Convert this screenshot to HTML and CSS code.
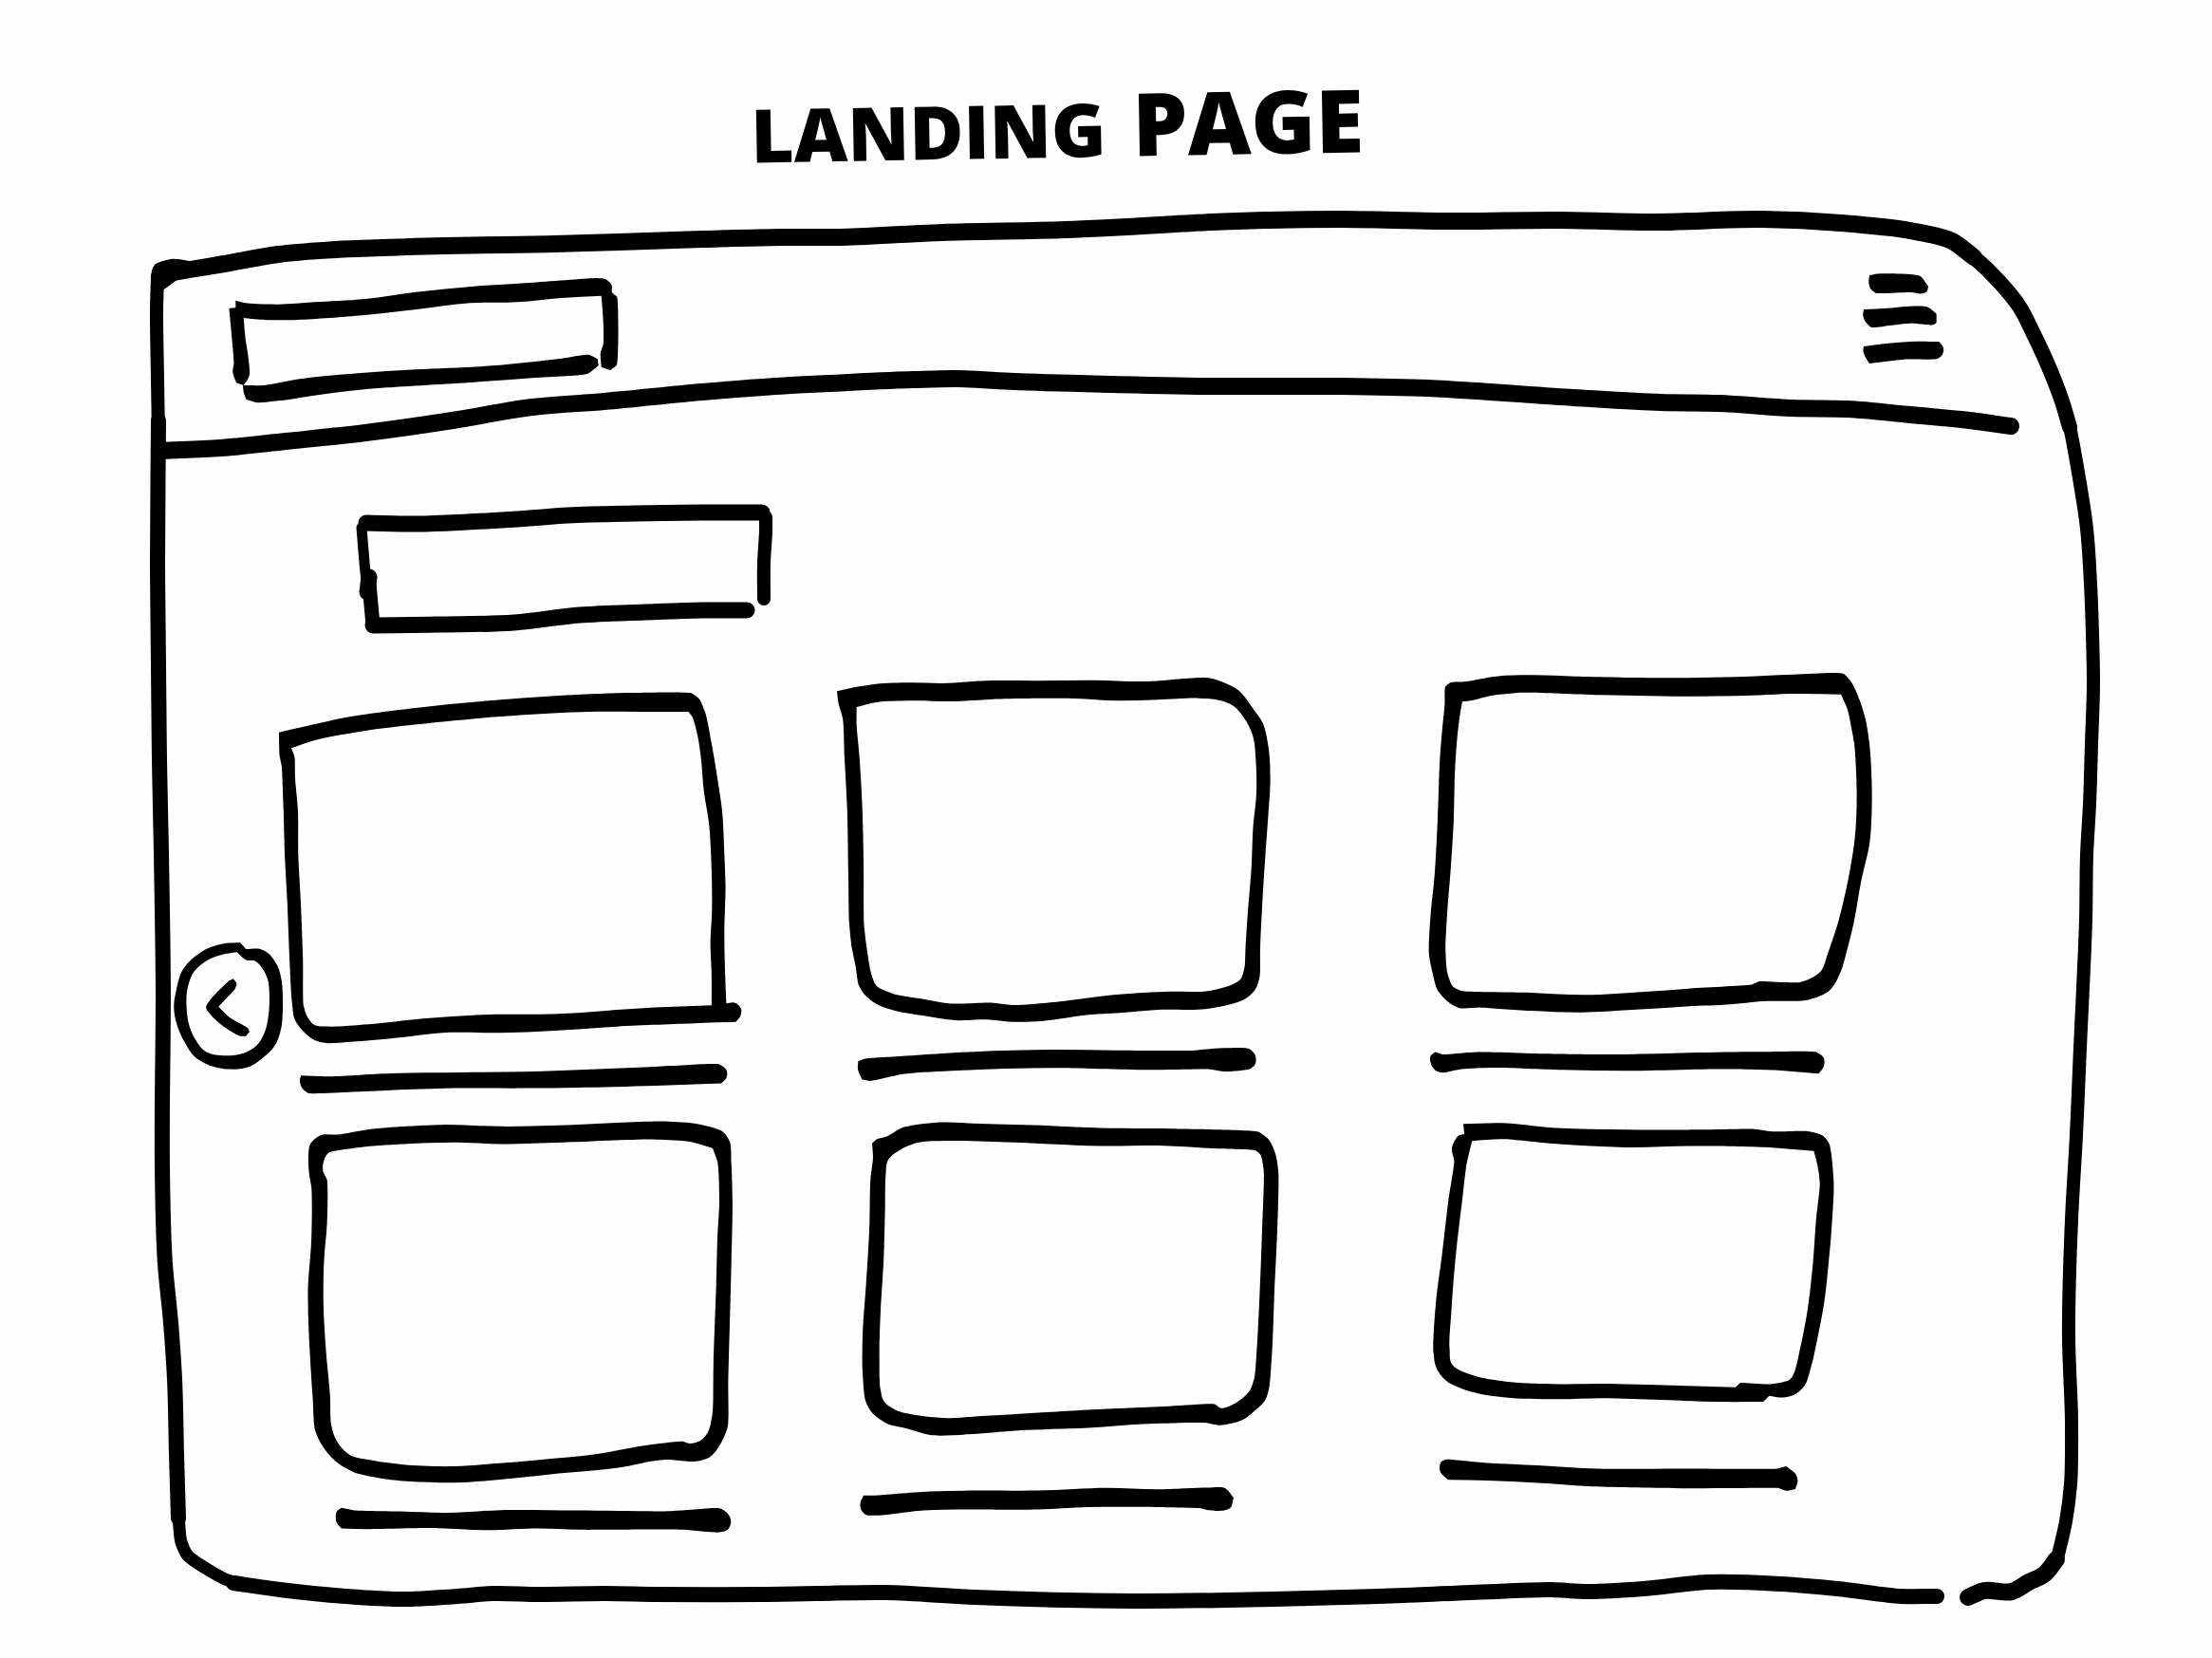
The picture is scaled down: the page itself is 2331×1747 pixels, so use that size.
FILE: index.html
```html
<!DOCTYPE html>
<html lang="en">
<head>
<meta charset="utf-8">
<meta name="viewport" content="width=device-width, initial-scale=1">
<title>Landing page</title>
<link rel="stylesheet" href="styles.css">
</head>
<body>
<h1 class="title"><span>LANDING</span> <span class="large">PAGE</span></h1>
<main class="frame">
  <!-- window outline and header rule -->
  <svg class="outline" viewBox="140 210 2091 1500" preserveAspectRatio="none" aria-hidden="true">
    <polyline stroke-width="18" points="171,289 200,284 236,278 293,268 354,263 469,259 584,257 740,252 824,250 885,250 993,245 1123,242 1276,234 1337,232 1413,231 1536,233 1643,232 1743,234 1857,231 1940,235 2013,243 2057,254 2080,271"/>
    <polygon points="160,285 163,279 180,273 215,278 188,294 172,305 164,306"/>
    <polyline stroke-width="16" points="2057,254 2080,271 2107,297 2128,323 2143,352 2157,382 2173,423 2181,450"/>
    <polyline stroke-width="14" points="2173,423 2181,450 2190,498 2199,557 2203,615 2205,668 2206,721 2204,784 2202,847 2199,901 2198,969 2195,1041 2192,1104 2188,1196 2183,1285 2180,1410 2183,1499 2182,1564 2177,1603 2167,1646"/>
    <polyline stroke-width="18" points="2167,1643 2154,1659 2138,1667 2120,1677 2091,1676 2074,1683"/>
    <polyline stroke-width="16" points="2041,1682 2003,1682 1936,1674 1877,1669 1800,1667 1732,1674 1674,1677 1635,1675 1480,1681 1380,1684 1193,1687 1027,1683 933,1678 860,1679 800,1680 691,1680 638,1679 568,1680 519,1679 482,1682 421,1685 364,1682 295,1675 246,1668"/>
    <polyline stroke-width="13" points="256,1669 240,1665 221,1655 197,1638 191,1625 188,1597"/>
    <polyline stroke-width="16" points="188,1600 186,1532 184,1453 180,1394 174,1332 171,1229 171,1160 172,1053 170,900 168,800 167,700 166,593 167,443"/>
    <polyline stroke-width="14" points="167,460 166,400 165,327 166,290"/>
    <polyline stroke-width="18" points="171,475 232,472 301,465 385,456 477,443 561,429 637,423 740,413 817,407 962,400 1008,399 1069,402 1276,407 1413,407 1505,409 1658,419 1750,424 1811,425 1888,430 1947,431 2013,437 2067,442 2119,449"/>
  </svg>

  <header class="bar">
    <a class="logo" href="#" aria-label="Home">
      <svg class="ink" viewBox="235 280 420 150">
        <g transform="translate(140 210) scale(.3827 .3333)">
          <polygon points="283,320 310,328 400,332 500,325 640,315 780,293 940,275 1100,263 1280,249 1300,252 1318,270 1320,295 1333,308 1332,525 1315,540 1290,530 1288,485 1295,460 1295,380 1290,305 1180,312 1060,325 930,328 780,348 600,370 430,382 350,380 305,375 310,440 318,500 320,560 305,588 285,580 275,545 278,520 272,430 265,345 283,343"/>
          <polygon points="303,588 360,588 460,568 620,550 780,538 1000,525 1180,503 1258,492 1280,505 1282,525 1255,550 1100,565 940,578 700,595 600,605 500,620 400,637 340,642 312,632 305,610"/>
        </g>
      </svg>
    </a>
    <button class="menu" type="button" aria-label="Menu">
      <svg class="ink" viewBox="1960 280 90 110">
        <g transform="translate(1880 200) scale(.3333)">
          <polygon points="270,270 290,266 432,274 456,305 452,320 436,328 400,324 290,326 275,315 268,295"/>
          <polygon points="252,378 330,374 400,368 455,371 482,392 482,420 472,427 400,422 340,428 275,434 260,420 250,398"/>
          <polygon points="252,495 330,485 400,480 490,480 504,500 500,522 485,534 380,536 320,543 270,549 258,530 250,508"/>
        </g>
      </svg>
    </button>
  </header>

  <div class="heading">
    <svg class="ink" viewBox="370 525 450 150" aria-hidden="true">
      <g class="pen">
        <polyline stroke-width="17" points="386,551 440,552 492,550 545,547 599,543 670,541 740,540 803,540"/>
        <polyline stroke-width="11" points="381,556 385,603 388,627"/>
        <polyline stroke-width="17" points="389,608 387,624"/>
        <polyline stroke-width="15" points="389,615 393,659"/>
        <polyline stroke-width="17" points="393,659 461,658 542,656 611,648 680,645 740,643 787,643"/>
        <polyline stroke-width="14" points="807,545 807,560 805,593 805,631"/>
      </g>
    </svg>
  </div>

  <section class="gallery">
    <button class="previous" type="button" aria-label="Previous">
      <svg class="ink" viewBox="180 980 110 150">
        <g transform="translate(160 700) scale(.4082 .3333)">
          <path fill-rule="evenodd" d="M228,880 243,900 280,900 302,915 325,955 335,1000 338,1090 334,1150 315,1210 280,1250 250,1273 200,1280 160,1272 115,1245 85,1195 65,1140 57,1085 63,1030 80,965 110,925 150,895 190,882ZM220,910 180,918 140,938 110,970 92,1025 90,1090 95,1135 112,1185 140,1225 190,1237 235,1230 270,1205 292,1160 302,1100 300,1000 285,960 265,937 245,935 230,922Z"/>
          <path d="M210,994 219,1010 215,1025 172,1082 200,1115 248,1150 252,1162 243,1175 228,1175 180,1140 150,1105 140,1085 150,1062 200,1000Z"/>
        </g>
      </svg>
    </button>

    <article class="card">
      <svg class="ink" viewBox="290 710 480 390">
        <path transform="translate(160 700) scale(.4082 .3333)" fill-rule="evenodd" d="M328,215 400,195 500,168 680,138 870,115 1060,98 1250,90 1395,92 1412,108 1428,150 1445,250 1460,360 1472,460 1478,600 1481,700 1478,850 1480,980 1483,1072 1505,1070 1520,1085 1520,1110 1508,1130 1400,1135 1200,1145 1040,1158 900,1165 750,1165 640,1180 530,1192 450,1197 420,1188 395,1165 370,1125 362,1070 355,920 350,760 343,600 340,460 335,320 330,290ZM360,265 368,290 370,360 377,460 378,600 384,740 390,930 392,1080 402,1115 420,1140 460,1145 560,1138 700,1120 850,1108 1050,1105 1250,1088 1445,1078 1445,980 1442,880 1446,780 1445,650 1438,500 1425,400 1418,300 1408,220 1395,165 1385,150 1260,150 1130,150 960,160 720,185 540,212 420,240Z"/>
      </svg>
      <svg class="ink" viewBox="290 1100 480 60">
        <path transform="translate(160 700) scale(.4082 .3333)" d="M385,1300 450,1303 620,1293 800,1290 960,1288 1150,1280 1300,1272 1465,1265 1482,1280 1484,1305 1470,1325 1300,1332 1100,1338 960,1340 800,1340 640,1345 520,1352 402,1355 388,1340 382,1315Z"/>
      </svg>
    </article>

    <article class="card">
      <svg class="ink" viewBox="870 710 520 390">
        <path transform="translate(860 690) scale(.3333)" fill-rule="evenodd" d="M66,115 120,103 190,92 300,88 400,90 540,82 700,82 880,80 1040,84 1180,74 1240,73 1290,88 1335,112 1385,175 1412,215 1430,290 1436,400 1430,500 1420,640 1410,800 1404,930 1402,1020 1390,1055 1360,1085 1320,1102 1230,1120 1080,1122 980,1130 860,1138 720,1157 620,1160 540,1153 440,1155 350,1142 250,1125 190,1103 150,1070 135,1045 125,985 112,920 105,850 102,700 98,480 90,330 84,200 70,150ZM128,165 190,150 300,145 440,147 560,140 820,138 950,145 1080,142 1210,137 1280,145 1320,162 1360,210 1382,260 1390,330 1392,440 1382,540 1376,680 1366,800 1358,920 1354,990 1342,1025 1320,1040 1245,1062 1100,1065 940,1075 780,1095 620,1107 560,1100 420,1102 340,1088 240,1070 190,1045 175,1010 162,940 152,860 150,650 146,480 136,310 128,220Z"/>
      </svg>
      <svg class="ink" viewBox="870 1100 520 60">
        <path transform="translate(860 690) scale(.3333)" d="M133,1285 155,1277 250,1270 400,1260 560,1252 740,1248 950,1250 1200,1250 1290,1243 1370,1246 1388,1265 1388,1295 1375,1308 1290,1317 1240,1310 1050,1312 750,1306 600,1308 450,1314 280,1325 170,1347 145,1342 132,1310Z"/>
      </svg>
    </article>

    <article class="card">
      <svg class="ink" viewBox="1490 710 500 390">
        <path transform="translate(1480 690) scale(.3333)" fill-rule="evenodd" d="M130,100 145,88 190,85 290,68 400,64 540,68 850,73 1050,70 1230,62 1390,61 1412,85 1438,140 1458,205 1470,280 1478,430 1470,600 1445,710 1420,850 1395,950 1380,1000 1345,1060 1280,1090 1130,1095 1030,1105 880,1112 720,1122 560,1130 400,1125 240,1115 170,1115 130,1090 105,1060 90,1010 78,950 82,830 95,700 105,520 112,330 120,230 127,160ZM183,148 215,144 270,130 360,120 620,127 850,131 1050,130 1240,123 1380,125 1400,170 1412,225 1422,280 1430,430 1424,580 1405,700 1370,850 1340,940 1318,998 1290,1020 1250,1035 1120,1033 1100,1042 900,1055 760,1065 570,1075 400,1068 180,1062 155,1050 137,1010 130,940 135,820 146,680 155,540 160,360 168,250 177,180Z"/>
      </svg>
      <svg class="ink" viewBox="1490 1100 500 60">
        <path transform="translate(1480 690) scale(.3333)" d="M82,1270 97,1256 120,1263 230,1256 400,1260 700,1263 900,1258 1130,1255 1305,1257 1326,1275 1326,1300 1310,1324 1200,1315 1000,1310 700,1315 500,1312 280,1305 180,1310 120,1321 100,1315 83,1290Z"/>
      </svg>
    </article>

    <article class="card">
      <svg class="ink" viewBox="290 1170 480 390">
        <path transform="translate(160 1160) scale(.4082 .3444)" fill-rule="evenodd" d="M410,130 435,105 480,103 560,87 750,73 900,78 1050,75 1200,67 1335,63 1420,73 1475,95 1492,125 1496,190 1499,310 1496,500 1492,680 1488,850 1486,1000 1470,1045 1440,1090 1405,1103 1320,1098 1200,1123 1050,1140 930,1155 780,1168 610,1158 520,1135 480,1108 440,1055 422,1010 415,900 405,700 403,580 412,420 412,265 405,210ZM455,160 530,143 650,132 790,127 900,132 1060,127 1300,118 1390,125 1448,145 1460,185 1465,300 1460,420 1457,560 1450,800 1447,960 1435,1015 1415,1040 1388,1048 1370,1042 1270,1055 1150,1080 1000,1098 880,1110 780,1118 650,1113 570,1100 510,1082 475,1035 463,990 460,900 450,770 443,620 445,480 452,380 452,240 442,215 445,180Z"/>
      </svg>
      <svg class="ink" viewBox="290 1560 480 60">
        <path transform="translate(160 1160) scale(.4082 .3444)" d="M478,1255 490,1245 520,1252 640,1256 760,1260 900,1252 1100,1253 1340,1255 1470,1248 1490,1268 1495,1290 1485,1313 1465,1320 1370,1312 1100,1312 1000,1308 860,1313 740,1307 560,1310 490,1308 477,1290Z"/>
      </svg>
    </article>

    <article class="card">
      <svg class="ink" viewBox="870 1170 520 390">
        <path transform="translate(860 1160) scale(.3333 .3444)" fill-rule="evenodd" d="M177,130 190,118 225,108 270,83 380,66 520,70 740,76 900,83 1120,85 1400,95 1428,115 1450,155 1461,210 1458,400 1450,560 1442,760 1432,880 1420,915 1390,945 1350,975 1275,992 1235,985 1050,988 860,1000 640,1008 480,1020 360,1022 290,1003 220,985 175,952 157,920 147,830 147,720 158,560 168,400 172,240 180,170ZM228,180 265,150 320,128 420,122 560,125 740,132 900,138 1100,137 1250,145 1390,152 1405,165 1415,210 1410,400 1402,600 1394,750 1385,850 1370,888 1320,928 1280,940 1260,928 1100,935 920,942 680,955 540,963 400,970 320,962 250,945 215,920 203,880 200,780 205,620 213,500 218,330 220,230Z"/>
      </svg>
      <svg class="ink" viewBox="870 1560 520 60">
        <path transform="translate(860 1160) scale(.3333 .3444)" d="M140,1230 150,1207 190,1207 360,1195 500,1192 700,1192 920,1184 1080,1188 1235,1183 1295,1186 1320,1215 1310,1245 1290,1253 1240,1252 1220,1247 1000,1242 860,1243 700,1250 480,1250 340,1253 200,1268 155,1265 142,1250Z"/>
      </svg>
    </article>

    <article class="card">
      <svg class="ink" viewBox="1490 1170 500 390">
        <path transform="translate(1480 1160) scale(.4847 .3571)" fill-rule="evenodd" d="M128,68 210,65 330,80 480,85 640,85 760,83 800,90 880,90 910,103 923,125 933,230 930,350 922,480 912,600 898,700 885,780 870,840 850,865 825,875 793,870 780,888 680,888 560,882 430,877 330,880 220,875 150,860 90,825 70,790 63,740 68,600 82,450 95,300 108,175 103,140 118,102 130,98ZM147,118 210,113 330,127 480,137 640,133 800,138 890,148 898,190 903,240 895,350 888,480 876,620 862,720 848,800 838,822 800,835 730,832 720,845 600,840 460,835 320,835 220,828 150,810 105,780 98,730 102,620 112,450 125,300 136,180Z"/>
      </svg>
      <svg class="ink" viewBox="1490 1560 500 60">
        <path transform="translate(1480 1160) scale(.4847 .3571)" d="M80,1065 90,1058 180,1068 290,1075 420,1085 600,1085 810,1085 830,1078 850,1100 855,1120 850,1145 830,1150 815,1143 600,1143 400,1137 290,1127 180,1120 95,1118 78,1095Z"/>
      </svg>
    </article>
  </section>
</main>
<script src="sketch.js"></script>
</body>
</html>
```
FILE: sketch.js
```js
// Rounds the straight pen segments into curves, leaving sharp corners as they are.
const SHARP = Math.cos(Math.PI / 3.5);

function curve(points, closed) {
  const n = points.length;
  const at = (i) => (closed ? points[(i + n) % n] : points[Math.max(0, Math.min(n - 1, i))]);

  // tangent at a point, and how far its handles may reach
  function handle(i) {
    const [a, b, c] = [at(i - 1), at(i), at(i + 1)];
    const before = Math.hypot(b[0] - a[0], b[1] - a[1]);
    const after = Math.hypot(c[0] - b[0], c[1] - b[1]);
    if (!before || !after) return { x: 0, y: 0, limit: 0 };
    const u = [(b[0] - a[0]) / before, (b[1] - a[1]) / before];
    const v = [(c[0] - b[0]) / after, (c[1] - b[1]) / after];
    if (u[0] * v[0] + u[1] * v[1] < SHARP) return { x: 0, y: 0, limit: 0 };
    const t = [u[0] * after + v[0] * before, u[1] * after + v[1] * before];
    const length = Math.hypot(t[0], t[1]);
    return { x: t[0] / length, y: t[1] / length, limit: Math.min(before, after) / 2.5 };
  }

  let d = `M${points[0]}`;
  for (let i = 0; i < (closed ? n : n - 1); i++) {
    const p = at(i);
    const q = at(i + 1);
    const third = Math.hypot(q[0] - p[0], q[1] - p[1]) / 3;
    const s = handle(i);
    const e = handle(i + 1);
    const out = Math.min(third, s.limit);
    const into = Math.min(third, e.limit);
    // a straight run keeps its line between the two handles
    const c1 = out ? [p[0] + s.x * out, p[1] + s.y * out] : [p[0] + (q[0] - p[0]) / 3, p[1] + (q[1] - p[1]) / 3];
    const c2 = into ? [q[0] - e.x * into, q[1] - e.y * into] : [q[0] - (q[0] - p[0]) / 3, q[1] - (q[1] - p[1]) / 3];
    d += `C${c1} ${c2} ${q}`;
  }
  return closed ? d + "Z" : d;
}

const parse = (text) => text.trim().split(/\s+/).map((pair) => pair.split(",").map(Number));

document.querySelectorAll("svg path").forEach((path) => {
  const loops = path.getAttribute("d").split("Z").filter((part) => part.trim());
  path.setAttribute("d", loops.map((loop) => curve(parse(loop.replace("M", "")), true)).join(""));
});

document.querySelectorAll("svg polyline, svg polygon").forEach((line) => {
  const path = document.createElementNS("http://www.w3.org/2000/svg", "path");
  const closed = line.tagName === "polygon";
  path.setAttribute("d", curve(parse(line.getAttribute("points")), closed));
  if (!closed) {
    path.setAttribute("class", "line");
    path.setAttribute("stroke-width", line.getAttribute("stroke-width"));
  }
  line.replaceWith(path);
});
```
FILE: styles.css
```css
* {
  box-sizing: border-box;
}

body {
  margin: 0;
  padding-bottom: 36px;
  background: #fefefe;
  color: #000;
  font-family: "Open Sans", "Noto Sans", sans-serif;
}

.title {
  display: flex;
  justify-content: center;
  align-items: baseline;
  gap: 28px;
  margin: 0;
  padding: 75px 104px 15px 0;
  font-size: 78px;
  font-weight: 800;
  line-height: 120px;
  rotate: -1deg;
}

.large {
  font-size: 92px;
  line-height: 108px;
}

.frame {
  position: relative;
  margin: 0 100px 0 140px;
  padding-bottom: 90px;
}

.outline {
  position: absolute;
  inset: 0;
  width: 100%;
  height: 100%;
  overflow: visible;
  pointer-events: none;
}

.line,
.outline polyline,
.pen polyline {
  fill: none;
  stroke: #000;
  stroke-linecap: round;
  stroke-linejoin: round;
}

.ink {
  display: block;
  width: 100%;
  height: auto;
  overflow: visible;
}

.bar {
  display: grid;
  grid-template-columns: 95fr 420fr 1305fr 90fr 181fr;
  align-items: start;
  padding-top: 70px;
}

.logo {
  grid-column: 2;
  color: inherit;
}

.menu {
  grid-column: 4;
}

.menu,
.previous {
  padding: 0;
  border: 0;
  background: none;
  color: inherit;
  cursor: pointer;
}

.heading {
  display: grid;
  grid-template-columns: 230fr 450fr 1411fr;
  margin-top: 95px;
}

.heading .ink {
  grid-column: 2;
}

.gallery {
  display: grid;
  grid-template-columns: 40fr 110fr 480fr 100fr 520fr 100fr 500fr 241fr;
  row-gap: 10px;
  margin-top: 35px;
}

.previous {
  grid-column: 2;
  align-self: end;
  margin-bottom: 30px;
}

.card:nth-of-type(3n + 1) {
  grid-column: 3;
}

.card:nth-of-type(3n + 2) {
  grid-column: 5;
}

.card:nth-of-type(3n) {
  grid-column: 7;
}
```
